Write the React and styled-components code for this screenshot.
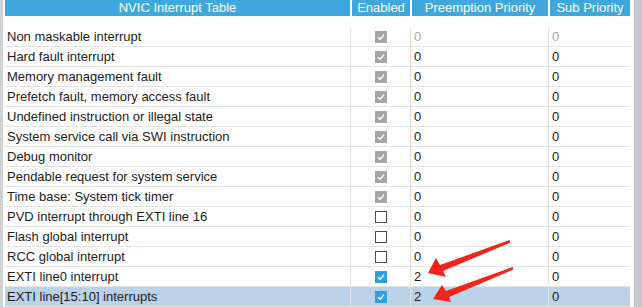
import React from "react";
import styled, { createGlobalStyle } from "styled-components";

const GlobalStyle = createGlobalStyle`
  html, body {
    margin: 0;
    padding: 0;
    background: #ffffff;
  }
  body {
    font-family: "Liberation Sans", Arial, sans-serif;
  }
`;

const COLS = "345px 60px 138px 82px";

const Frame = styled.div`
  position: relative;
  display: flex;
  width: 642px;
  height: 307px;
  overflow: hidden;
  background: #ffffff;
`;

const LeftEdge = styled.div`
  width: 3px;
  background: #cfd1d3;
  margin-right: 2px;
`;

const Table = styled.div`
  display: flex;
  flex-direction: column;
  width: 625px;
`;

const HeaderRow = styled.div`
  display: grid;
  grid-template-columns: ${COLS};
  height: 16px;
  margin-bottom: 11px;
`;

const HeaderCell = styled.div`
  background: #3ea8dc;
  color: #ffffff;
  font-size: 13px;
  line-height: 15px;
  text-align: center;
  white-space: nowrap;
  overflow: hidden;
  margin-left: ${(p) => (p.$first ? "0" : "2px")};
`;

const Row = styled.div`
  display: grid;
  grid-template-columns: ${COLS};
  height: 20px;
  box-sizing: border-box;
  border-bottom: 1px solid #e4e4e4;
  background: ${(p) => (p.$selected ? "#bcd2e8" : "transparent")};
`;

const Cell = styled.div`
  display: flex;
  align-items: center;
  justify-content: ${(p) => (p.$center ? "center" : "flex-start")};
  padding-left: ${(p) => (p.$center ? "0" : p.$num ? "3px" : "2px")};
  border-left: ${(p) => (p.$first ? "none" : "1px solid #e4e4e4")};
  font-size: 13px;
  color: ${(p) => (p.$muted ? "#a8a8a8" : "#1c1c1c")};
  white-space: nowrap;
  overflow: hidden;
`;

const Box = styled.span`
  display: flex;
  align-items: center;
  justify-content: center;
  width: 12px;
  height: 12px;
  box-sizing: border-box;
  margin-left: 1px;
  background: ${(p) =>
    p.$state === "disabled" ? "#a5a5a5" : p.$state === "on" ? "#2f9fe2" : "#ffffff"};
  border: 1px solid
    ${(p) =>
      p.$state === "disabled" ? "#a5a5a5" : p.$state === "on" ? "#2f9fe2" : "#4a4a4a"};
`;

const Scrollbar = styled.div`
  width: 8px;
  margin-left: auto;
  background: #c5c9cd;
`;

const Arrows = styled.svg`
  position: absolute;
  left: 0;
  top: 0;
  pointer-events: none;
`;

function Check({ state }) {
  return (
    <Box $state={state}>
      {state !== "off" && (
        <svg width="10" height="10" viewBox="0 0 10 10">
          <path d="M2 5.2 L4.2 7.3 L8 2.8" fill="none" stroke="#ffffff" strokeWidth="1.4" />
        </svg>
      )}
    </Box>
  );
}

const rows = [
  { name: "Non maskable interrupt", check: "disabled", pre: "0", sub: "0", muted: true },
  { name: "Hard fault interrupt", check: "disabled", pre: "0", sub: "0" },
  { name: "Memory management fault", check: "disabled", pre: "0", sub: "0" },
  { name: "Prefetch fault, memory access fault", check: "disabled", pre: "0", sub: "0" },
  { name: "Undefined instruction or illegal state", check: "disabled", pre: "0", sub: "0" },
  { name: "System service call via SWI instruction", check: "disabled", pre: "0", sub: "0" },
  { name: "Debug monitor", check: "disabled", pre: "0", sub: "0" },
  { name: "Pendable request for system service", check: "disabled", pre: "0", sub: "0" },
  { name: "Time base: System tick timer", check: "disabled", pre: "0", sub: "0" },
  { name: "PVD interrupt through EXTI line 16", check: "off", pre: "0", sub: "0" },
  { name: "Flash global interrupt", check: "off", pre: "0", sub: "0" },
  { name: "RCC global interrupt", check: "off", pre: "0", sub: "0" },
  { name: "EXTI line0 interrupt", check: "on", pre: "2", sub: "0" },
  { name: "EXTI line[15:10] interrupts", check: "on", pre: "2", sub: "0", selected: true },
];

export default function App() {
  return (
    <>
      <GlobalStyle />
      <Frame>
        <LeftEdge />
        <Table>
          <HeaderRow>
            <HeaderCell $first>NVIC Interrupt Table</HeaderCell>
            <HeaderCell>Enabled</HeaderCell>
            <HeaderCell>Preemption Priority</HeaderCell>
            <HeaderCell>Sub Priority</HeaderCell>
          </HeaderRow>
          {rows.map((r) => (
            <Row key={r.name} $selected={r.selected}>
              <Cell $first>{r.name}</Cell>
              <Cell $center>
                <Check state={r.check} />
              </Cell>
              <Cell $num $muted={r.muted}>{r.pre}</Cell>
              <Cell $num $muted={r.muted}>{r.sub}</Cell>
            </Row>
          ))}
        </Table>
        <Scrollbar />
        <Arrows width="642" height="307" viewBox="0 0 642 307">
          <polygon
            points="428,273 436,258 440,265 509.5,240 510.5,242.5 443,271 446,277"
            fill="#f2231b"
          />
          <polygon
            points="433,299 442,285 446,291 512.5,267 513.5,269.5 449,297 451,302"
            fill="#f2231b"
          />
        </Arrows>
      </Frame>
    </>
  );
}
